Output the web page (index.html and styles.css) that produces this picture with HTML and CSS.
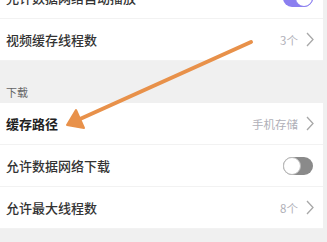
FILE: index.html
```html
<!DOCTYPE html>
<html lang="zh-CN">
<head>
    <meta charset="UTF-8">
    <title>设置</title>
    <link rel="stylesheet" href="styles.css">
</head>
<body>

<div class="settings">
    <div class="row row-clipped">
        <span class="label">允许数据网络自动播放</span>
        <span class="switch on"><span class="knob"></span></span>
    </div>
    <div class="row">
        <span class="label">视频缓存线程数</span>
        <span class="value">3个<svg class="chev" viewBox="0 0 8 15"><path d="M1 1 L7 7.5 L1 14"/></svg></span>
    </div>

    <div class="section">下载</div>

    <div class="row">
        <span class="label strong">缓存路径</span>
        <span class="value">手机存储<svg class="chev" viewBox="0 0 8 15"><path d="M1 1 L7 7.5 L1 14"/></svg></span>
    </div>
    <div class="row">
        <span class="label">允许数据网络下载</span>
        <span class="switch"><span class="knob"></span></span>
    </div>
    <div class="row">
        <span class="label">允许最大线程数</span>
        <span class="value">8个<svg class="chev" viewBox="0 0 8 15"><path d="M1 1 L7 7.5 L1 14"/></svg></span>
    </div>
</div>

<!-- annotation arrow drawn over the screenshot -->
<svg class="arrow" viewBox="0 0 327 242">
    <line x1="251" y1="42" x2="80" y2="119" />
    <polygon points="67,125 76,110 84,128" />
</svg>

</body>
</html>
```

FILE: styles.css
```css
body {
    margin: 0;
    background-color: #f0f0f0;
    font-family: "Noto Sans CJK SC", "Noto Sans", sans-serif;
    overflow: hidden;
    height: 242px;
    position: relative;
}
.settings {
    margin-right: 4px;
}
.row {
    display: flex;
    align-items: center;
    justify-content: space-between;
    height: 41px;
    padding: 0 9px 0 6px;
    background-color: #fff;
    border-bottom: 1px solid #f2f2f2;
}
.row-clipped {
    margin-top: -23px;
}
.label {
    font-size: 13px;
    color: #333;
    font-weight: 500;
}
.label.strong {
    font-weight: 700;
    color: #222;
}
.value {
    display: flex;
    align-items: center;
    gap: 8px;
    font-size: 11.5px;
    color: #b0b0b8;
}
.chev {
    width: 8px;
    height: 15px;
}
.chev path {
    fill: none;
    stroke: #a8a8a8;
    stroke-width: 1.3;
}
.switch {
    width: 30px;
    height: 18px;
    border-radius: 9px;
    background-color: #8a8a8a;
    position: relative;
    margin-right: 1px;
}
.switch .knob {
    position: absolute;
    top: 0;
    left: 0;
    width: 16px;
    height: 16px;
    border: 1px solid #bbb;
    border-radius: 50%;
    background-color: #fff;
}
.switch.on {
    background-color: #8b7ff0;
}
.switch.on .knob {
    left: 12px;
    border-color: #8b7ff0;
}
.section {
    height: 42px;
    display: flex;
    align-items: flex-end;
    padding: 0 6px 3px;
    box-sizing: border-box;
    font-size: 11px;
    color: #666;
}
.arrow {
    position: absolute;
    top: 0;
    left: 0;
    width: 327px;
    height: 242px;
}
.arrow line {
    stroke: #e8914a;
    stroke-width: 4;
    stroke-linecap: round;
}
.arrow polygon {
    fill: #e8914a;
    stroke: #e8914a;
    stroke-width: 2;
    stroke-linejoin: round;
}
```
